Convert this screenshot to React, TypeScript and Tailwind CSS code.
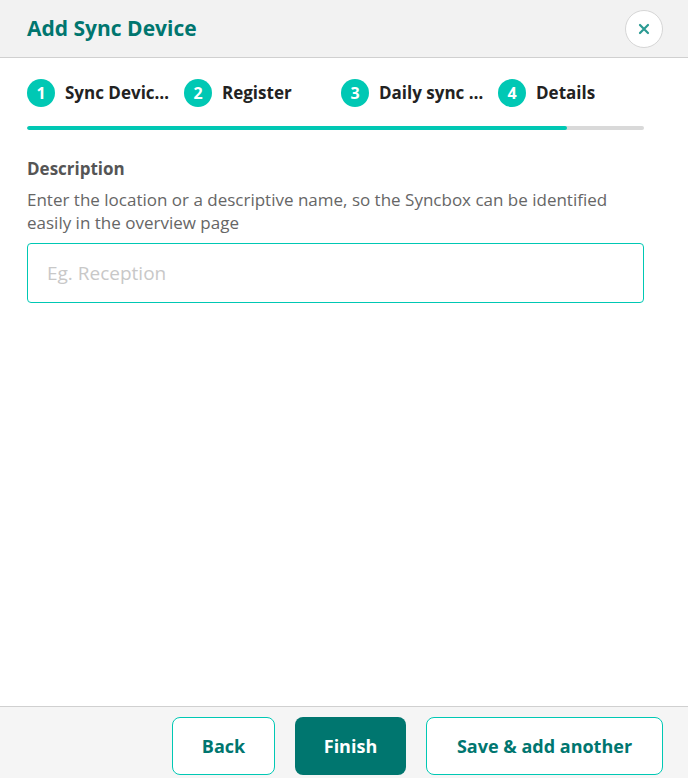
import React from 'react';

const steps = ['Sync Device type', 'Register', 'Daily sync time', 'Details'];

export default function App() {
  return (
    <div className="w-[688px] h-[778px] flex flex-col bg-white font-['Open_Sans',sans-serif] overflow-hidden">
      {/* Header */}
      <div className="h-[58px] shrink-0 flex items-center justify-between pl-[27px] pr-[25px] bg-[#f2f2f2] border-b border-[#d0d0d0]">
        <h1 className="text-[21px] font-bold text-[#00766f]">Add Sync Device</h1>
        <button className="w-[38px] h-[38px] rounded-full bg-white border border-[#d6d6d6] flex items-center justify-center text-[#2a9a92]">
          <svg width="12" height="12" viewBox="0 0 12 12" fill="none" stroke="currentColor" strokeWidth="2.2" strokeLinecap="round">
            <path d="M2 2l8 8M10 2l-8 8" />
          </svg>
        </button>
      </div>

      {/* Body */}
      <div className="flex-1 px-[27px] pt-[21px]">
        <div className="grid grid-cols-4 w-[628px] h-[28px]">
          {steps.map((s, i) => (
            <div key={s} className="flex items-center gap-[10px] min-w-0 pr-[12px]">
              <span className="w-[28px] h-[28px] shrink-0 rounded-full bg-[#00c8b4] text-white text-[16px] font-bold flex items-center justify-center">
                {i + 1}
              </span>
              <span className="text-[17px] font-bold text-[#222] truncate">{s}</span>
            </div>
          ))}
        </div>
        <div className="mt-[19px] w-[617px] h-[4px] rounded-full bg-[#d9d9d9] overflow-hidden">
          <div className="h-full w-[87.5%] bg-[#00c8b4] rounded-full" />
        </div>

        <div className="mt-[28px] w-[617px]">
          <div className="text-[17px] font-bold text-[#555] leading-[22px]">Description</div>
          <p className="mt-[8px] text-[17px] text-[#666] leading-[23px] pr-[20px]">
            Enter the location or a descriptive name, so the Syncbox can be identified easily in the overview page
          </p>
          <input
            className="mt-[9px] w-full h-[60px] rounded-[4px] border border-[#00c8b4] px-[19px] text-[19px] text-[#333] placeholder:text-[#c8c8c8] outline-none"
            placeholder="Eg. Reception"
          />
        </div>
      </div>

      {/* Footer */}
      <div className="h-[72px] shrink-0 bg-[#f5f5f5] border-t border-[#d0d0d0] flex items-start justify-end gap-[20px] pr-[25px] pt-[10px]">
        <button className="w-[103px] h-[58px] rounded-[8px] bg-white border border-[#00c8b4] text-[#00766f] text-[18px] font-bold">
          Back
        </button>
        <button className="w-[111px] h-[58px] rounded-[8px] bg-[#00766f] text-white text-[18px] font-bold">
          Finish
        </button>
        <button className="w-[237px] h-[58px] rounded-[8px] bg-white border border-[#00c8b4] text-[#00766f] text-[18px] font-bold">
          Save &amp; add another
        </button>
      </div>
    </div>
  );
}
